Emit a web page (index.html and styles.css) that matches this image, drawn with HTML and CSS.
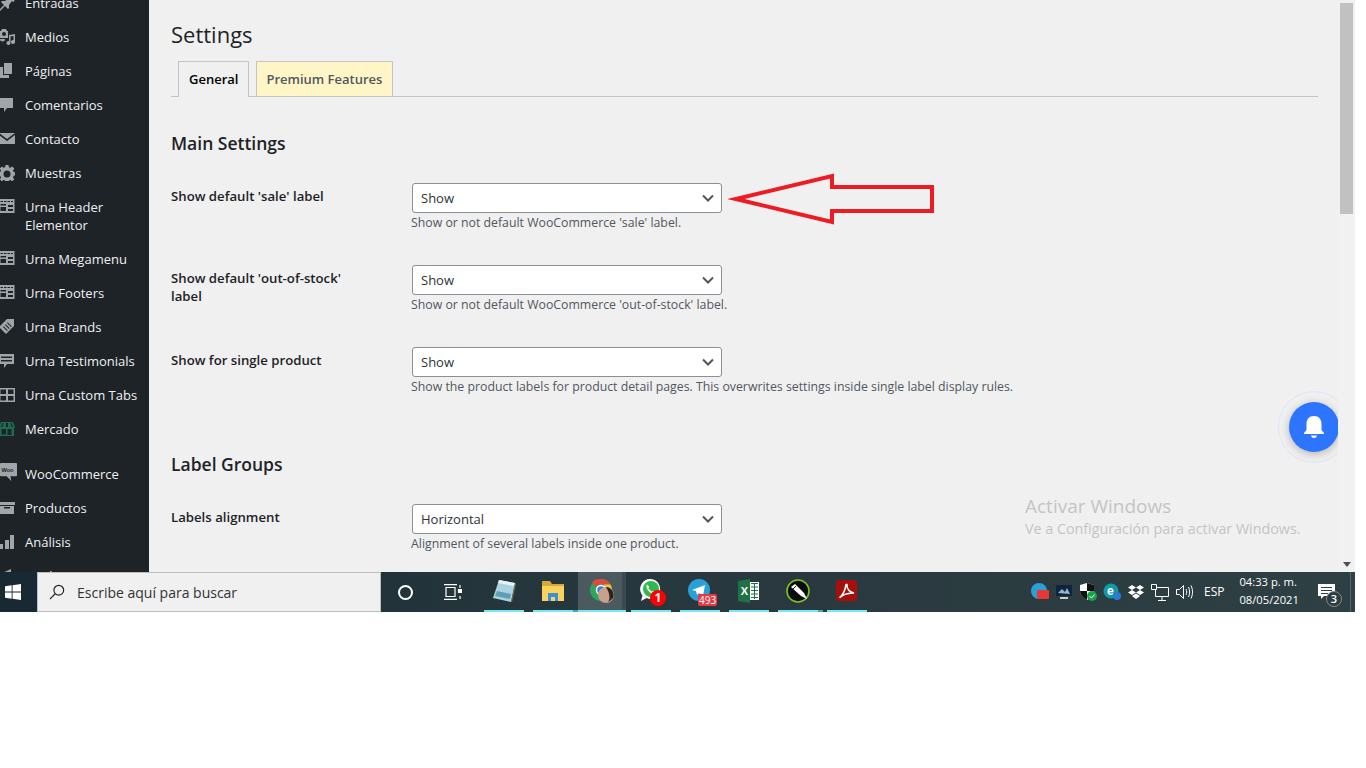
FILE: index.html

```html
<!DOCTYPE html>
<html>
<head>
  <title>Settings</title>
  <link rel="stylesheet" href="styles.css">
</head>
<body>
  <svg class="defs" width="0" height="0">
    <symbol id="i-table" viewBox="0 0 16 16">
      <path d="M0 0h15.500v14H0z M1.500 2v1h2.500V2z M5 2v1h2.500V2z M8.500 2v1h2.500V2z M12 2v1h2V2z M1.500 5v1.500h5.500V5z M1.500 8v4h5.500V8z M9 6v2h5V6z M9 10v2h5v-2z" fill-rule="evenodd"/>
    </symbol>
  </svg>

  <div class="screen">
    <div class="desktop">
      <!-- menu lateral -->
      <nav class="sidebar">
        <ul class="menu">
          <li><svg class="ico" viewBox="0 0 16 16"><path d="M9 0l7 6-2 1-1-1-3 4 0 3-1 1-3-3-5 5-1 0 0-1 5-5-3-3 1-1 3 0 4-3-1-1z"/></svg>Entradas</li>
          <li><svg class="ico" viewBox="0 0 16 16"><path d="M0 2h2l1-2h4l1 2h1v7H0z M5 3a2 2 0 100 4 2 2 0 000-4z M10 6l6-1v8a2 2 0 11-1.500-2V7l-3 .5V14a2 2 0 11-1.500-2z M1 10h5a2.500 2.500 0 11-5 0z" fill-rule="evenodd"/></svg>Medios</li>
          <li><svg class="ico" viewBox="0 0 16 16"><path d="M5 0h8v11H5z M1 4h3v8h6v3H1z"/></svg>Páginas</li>
          <li><svg class="ico" viewBox="0 0 16 16"><path d="M1 1h13v10H8l-3 4v-4H1z"/></svg>Comentarios</li>
          <li><svg class="ico" viewBox="0 0 16 16"><path d="M0 2h16L8 8z M0 4l8 6 8-6v9H0z"/></svg>Contacto</li>
          <li><svg class="ico" viewBox="0 0 16 16"><path d="M6.500 0h3l.4 2.200 1.500.6L13.200 1.500l2.100 2.100-1.300 1.800.7 1.600 2.300.4v3l-2.300.4-.7 1.600 1.300 1.800-2.100 2.100-1.800-1.300-1.500.6-.4 2.400h-3l-.4-2.400-1.500-.6-1.800 1.300L.7 14.300 2 12.500l-.7-1.600L-1 10.500v-3l2.300-.4.700-1.600L.7 3.600l2.100-2.100 1.800 1.300 1.500-.6z M8 5.500a3.500 3.500 0 100 7 3.500 3.500 0 000-7z" fill-rule="evenodd"/></svg>Muestras</li>
          <li><svg class="ico"><use href="#i-table"/></svg>Urna Header Elementor</li>
          <li><svg class="ico"><use href="#i-table"/></svg>Urna Megamenu</li>
          <li><svg class="ico"><use href="#i-table"/></svg>Urna Footers</li>
          <li><svg class="ico" viewBox="0 0 16 16"><path d="M0 8L8 0h7v7l-8 8z M4 8l4 4 .7-.7-4-4z M6 6l4 4 .7-.7-4-4z M8 4l4 4 .7-.7-4-4z" fill-rule="evenodd"/></svg>Urna Brands</li>
          <li><svg class="ico" viewBox="0 0 16 16"><path d="M0 1h15v10H8l-3 4v-4H0z M2 3.500v1.500h11V3.500z M2 7v1.500h11V7z" fill-rule="evenodd"/></svg>Urna Testimonials</li>
          <li><svg class="ico" viewBox="0 0 16 16"><path d="M0 1h16v14H0z M1.500 2.500v4.500h5.500V2.500z M9 2.500v4.500h5.500V2.500z M1.500 9v4.500h5.500V9z M9 9v4.500h5.500V9z" fill-rule="evenodd"/></svg>Urna Custom Tabs</li>
          <li><svg class="ico ico-green" viewBox="0 0 16 16"><path d="M2 1h12l2 5-1 1.500V15H1V7.500L0 6z M3.500 2L2 6h1.500l1-4z M7 2v4h2V2z M11.500 2l1 4H14l-1.500-4z M2.500 8v5.500H7V8z M8.500 8v6h4V8z" fill-rule="evenodd"/></svg>Mercado</li>
          <li class="sep"><svg class="ico ico-woo" viewBox="0 0 18 20"><path d="M1 0h16a1 1 0 011 1v12a1 1 0 01-1 1h-6l1 5-5-5H1a1 1 0 01-1-1V1a1 1 0 011-1z"/><text x="1.500" y="9" class="woo">Woo</text></svg>WooCommerce</li>
          <li><svg class="ico" viewBox="0 0 16 16"><path d="M0 2h16v3H0z M1 6h14v8H1z M5 7v1.500h6V7z" fill-rule="evenodd"/></svg>Productos</li>
          <li><svg class="ico" viewBox="0 0 16 16"><path d="M0 10h4v5H0z M6 6h4v9H6z M11 1h4v14h-4z"/></svg>Análisis</li>
          <li><svg class="ico" viewBox="0 0 16 16"><path d="M1 6l11-5v13L1 10z"/></svg>Marketing</li>
        </ul>
      </nav>

      <main class="content">
        <h1>Settings</h1>
        <div class="tabs">
          <a class="tab tab-active">General</a>
          <a class="tab tab-premium">Premium Features</a>
        </div>

        <h2 class="first">Main Settings</h2>

        <div class="row">
          <label>Show default 'sale' label</label>
          <div class="field">
            <select><option>Show</option></select>
            <p class="desc">Show or not default WooCommerce 'sale' label.</p>
          </div>
        </div>
        <div class="row">
          <label>Show default 'out-of-stock' label</label>
          <div class="field">
            <select><option>Show</option></select>
            <p class="desc">Show or not default WooCommerce 'out-of-stock' label.</p>
          </div>
        </div>
        <div class="row">
          <label>Show for single product</label>
          <div class="field">
            <select><option>Show</option></select>
            <p class="desc">Show the product labels for product detail pages. This overwrites settings inside single label display rules.</p>
          </div>
        </div>

        <h2>Label Groups</h2>

        <div class="row">
          <label>Labels alignment</label>
          <div class="field">
            <select><option>Horizontal</option></select>
            <p class="desc">Alignment of several labels inside one product.</p>
          </div>
        </div>

        <!-- flecha roja pintada encima -->
        <svg class="arrow" width="212" height="60" viewBox="0 0 212 60">
          <path d="M8 27L104 4V15H204V39H104V50Z" fill="none" stroke="#ed1c24" stroke-width="4" stroke-miterlimit="10"/>
        </svg>

        <div class="bell">
          <svg width="24" height="24" viewBox="0 0 24 24"><path d="M12 1c-5 0-7.500 3.500-7.500 8v6L2 18v1h20v-1l-2.500-3V9c0-4.500-2.500-8-7.500-8z M9 20.500h6c-.5 1.800-1.500 2.500-3 2.500s-2.500-.7-3-2.500z" fill="#fff"/></svg>
        </div>

        <div class="watermark">
          <div class="wm-title">Activar Windows</div>
          <div class="wm-sub">Ve a Configuración para activar Windows.</div>
        </div>
      </main>

      <div class="scrollbar">
        <div class="thumb"></div>
        <div class="scroll-down"></div>
      </div>
    </div>

    <footer class="taskbar">
      <div class="start">
        <svg width="16" height="16" viewBox="0 0 18 18"><path d="M0 2.500l7.500-1v7H0z M8.500 1.300L18 0v8.500H8.500z M0 9.500h7.500v7l-7.500-1z M8.500 9.500H18V18l-9.500-1.300z" fill="#fff"/></svg>
      </div>
      <div class="search">
        <svg width="16" height="16" viewBox="0 0 18 18"><circle cx="11" cy="7" r="5.500" fill="none" stroke="#222" stroke-width="1.300"/><path d="M7 11l-6 6" stroke="#222" stroke-width="1.300"/></svg>
        <span>Escribe aquí para buscar</span>
      </div>
      <div class="cortana"><span class="ring"></span></div>
      <div class="taskview">
        <svg width="18" height="16" viewBox="0 0 18 16" fill="none" stroke="#fff" stroke-width="1.200"><path d="M0 .6h13M0 15.400h13M2 3.500h9v9H2z"/><path d="M16 1v3M16 12v3"/><path d="M14.500 5.500h3v3h-3z" fill="#fff"/></svg>
      </div>

      <div class="apps">
        <div class="app">
          <svg width="24" height="24" viewBox="0 0 24 24"><path d="M7 1l16 3-4 19L1 19z" fill="#a9d3de"/><path d="M7 1l16 3-1 3L6 4z" fill="#e8f2f4"/><path d="M19 23l4-19 1 1-4 18z" fill="#7a6a50"/><path d="M5 12l14 3-1 5L3 17z" fill="#5f9fb3"/></svg>
        </div>
        <div class="app app-stack">
          <svg width="24" height="24" viewBox="0 0 24 24"><path d="M1 2h8l2 3h12v5H1z" fill="#d9a83a"/><path d="M1 7h22v15H1z" fill="#fbd25c"/><path d="M7 14h10v8h-3v-4h-4v4H7z" fill="#3a8fd8"/></svg>
        </div>
        <div class="app app-active">
          <svg width="26" height="26" viewBox="0 0 26 26"><circle cx="12" cy="12" r="11" fill="#2ea55a"/><path d="M12 1a11 11 0 019.500 5.500H12A5.500 5.500 0 007 9L3 4a11 11 0 019-3z" fill="#dd4b3e"/><path d="M21.500 6.500A11 11 0 0121 18l-5-2-1-9.500z" fill="#f3c13a"/><circle cx="12" cy="12" r="4.500" fill="#3b78e7" stroke="#fff" stroke-width="1.500"/><circle cx="17" cy="17" r="8" fill="#c9a08a"/><path d="M17 9a8 8 0 017 11c-2 2-3 3-5 4 3-4 1-10-2-15z" fill="#2c2320"/></svg>
        </div>
        <div class="app">
          <svg width="24" height="26" viewBox="0 0 24 26"><path d="M2 23l1.500-5.500A10 10 0 1112 21a10 10 0 01-4.500-1z" fill="#fff"/><circle cx="12" cy="11" r="8" fill="#2fb84d"/><path d="M8 6.500c-1.500 2 0 5 2 7s4.500 3 6 1.500l-1.500-2-2 .5-3-3 .5-2z" fill="#fff"/></svg>
          <span class="badge-red">1</span>
        </div>
        <div class="app">
          <svg width="24" height="24" viewBox="0 0 24 24"><circle cx="11" cy="11" r="11" fill="#2a9fd8"/><path d="M4 11l13-5-2 11-4-3-2 2-1-4z" fill="#fff"/></svg>
          <span class="badge-count">493</span>
        </div>
        <div class="app">
          <svg width="24" height="24" viewBox="0 0 24 24"><path d="M8 3h14v18H8z" fill="#fff"/><path d="M14 4.500h7M14 8h7M14 11.500h7M14 15h7M14 18.500h7M17.500 4v16" stroke="#1f7244" stroke-width="1"/><path d="M1 2l12-2v24L1 22z" fill="#1f7244"/><text x="3.700" y="16" class="xl">X</text></svg>
        </div>
        <div class="app app-stack">
          <svg width="24" height="24" viewBox="0 0 24 24"><circle cx="12" cy="12" r="11" fill="#0c0c0c" stroke="#7fc31c" stroke-width="1.600"/><path d="M5 8l4-3 9 9 3 6-6-3z" fill="#fff"/><path d="M7 10l3-3" stroke="#0c0c0c"/></svg>
        </div>
        <div class="app">
          <svg width="22" height="22" viewBox="0 0 22 22"><rect width="21" height="21" rx="3" fill="#a50f0c"/><path d="M4 17c3-2 5-7 6-12 0-1 1-1 1 0 0 4 3 7 7 8-4 0-9 1-12 3-1 1-2 2-2 1z" fill="none" stroke="#fff" stroke-width="1.500"/></svg>
        </div>
      </div>

      <div class="tray">
        <span class="tray-item"><svg width="18" height="18" viewBox="0 0 18 18"><circle cx="8" cy="8" r="8" fill="#2a9fd8"/><rect x="6" y="7" width="12" height="9" rx="1" fill="#e53935"/></svg></span>
        <span class="tray-item"><svg width="18" height="16" viewBox="0 0 18 16"><path d="M1 1h16v11H1z" fill="#10243c"/><path d="M3 9l4-4 3 3 2-4 3 6z" fill="#8fb6d8"/><path d="M5 13h8v2H5z" fill="#ccc"/></svg></span>
        <span class="tray-item"><svg width="18" height="18" viewBox="0 0 18 18"><path d="M8 0l7 2v6c0 4-3 7-7 9-4-2-7-5-7-9V2z" fill="#fff"/><path d="M8 0v8h7V2z M8 8v9c-4-2-7-5-7-9z" fill="#111"/><circle cx="13" cy="13" r="5" fill="#17a34a"/><path d="M10.500 13l2 2 3-3.500" fill="none" stroke="#fff"/></svg></span>
        <span class="tray-item"><svg width="18" height="18" viewBox="0 0 18 18"><circle cx="8" cy="8" r="7.500" fill="#0e9aa7"/><text x="4" y="12" class="tray-e">e</text><circle cx="14" cy="13" r="4" fill="#2a7ad8"/></svg></span>
        <span class="tray-item"><svg width="16" height="15" viewBox="0 0 16 15" fill="#fff"><path d="M4 0l4 2.500L4 5 0 2.500z M12 0l4 2.500L12 5 8 2.500z M4 5l4 2.500L4 10 0 7.500z M12 5l4 2.500-4 2.500-4-2.500z M4 11l4-2.500 4 2.500-4 3z"/></svg></span>
        <span class="tray-item"><svg width="18" height="17" viewBox="0 0 18 17" fill="none" stroke="#fff"><path d="M4.500 3.500h13v9h-13zM11 13v3M7 16.500h8"/><path d="M.500.500h5v5h-5z" fill="#2c3c42"/></svg></span>
        <span class="tray-item"><svg width="17" height="16" viewBox="0 0 17 16" fill="none" stroke="#fff"><path d="M.500 5.500h3l4-4v13l-4-4h-3z"/><path d="M10 5c1 2 1 4 0 6M12.500 3c1.500 3 1.500 7 0 10M15 1.500c2 4 2 9 0 13"/></svg></span>
      </div>
      <div class="lang">ESP</div>
      <div class="clock"><div>04:33 p. m.</div><div>08/05/2021</div></div>
      <div class="notif">
        <svg width="17" height="15" viewBox="0 0 17 15"><path d="M0 0h17v12H6l-3 3v-3H0z M3 3v1h11V3z M3 6v1h11V6z M3 9v1h7V9z" fill="#fff" fill-rule="evenodd"/></svg>
        <span class="notif-count">3</span>
      </div>
    </footer>
  </div>
</body>
</html>
```

FILE: styles.css

```css
/* pagina */
html, body {
  margin: 0;
  padding: 0;
  background: #fff;
}
body {
  font-family: "Open Sans", "Noto Sans", sans-serif;
  font-size: 13px;
  color: #1d2327;
}
.defs {
  position: absolute;
}
.screen {
  width: 1355px;
  height: 612px;
  display: flex;
  flex-direction: column;
  overflow: hidden;
}
.desktop {
  display: flex;
  height: 572px;
  background: #f0f0f1;
}

/* menu lateral */
.sidebar {
  width: 149px;
  flex: none;
  background: #1d2327;
  overflow: hidden;
}
.menu {
  list-style: none;
  margin: -14px 0 0;
  padding: 0;
}
.menu li {
  position: relative;
  padding: 8px 6px 8px 25px;
  font-size: 13px;
  line-height: 18px;
  color: #f0f0f1;
}
.menu li.sep {
  margin-top: 11px;
}
.ico {
  position: absolute;
  left: -1px;
  top: 9px;
  width: 16px;
  height: 16px;
  fill: #a0a5aa;
}
.ico-green {
  fill: #1f6b52;
}
.ico-woo {
  left: 0;
  top: 6px;
  width: 17px;
  height: 19px;
}
.woo {
  font-family: "Liberation Sans", sans-serif;
  font-size: 6px;
  font-weight: 700;
  fill: #1d2327;
}

/* contenido */
.content {
  position: relative;
  flex: 1;
  min-width: 0;
  padding: 0 20px 0 22px;
  overflow: hidden;
}
h1 {
  margin: 20px 0 0;
  font-size: 22px;
  font-weight: 400;
  line-height: 29px;
  color: #1d2327;
}
.tabs {
  display: flex;
  gap: 7px;
  height: 35px;
  margin-top: 12px;
  padding-left: 7px;
  border-bottom: 1px solid #c3c4c7;
}
.tab {
  height: 34px;
  padding: 0 10px;
  border: 1px solid #c3c4c7;
  border-bottom: none;
  font-weight: 600;
  font-size: 13px;
  line-height: 34px;
}
.tab-active {
  height: 35px;
  background: #f0f0f1;
  color: #000;
}
.tab-premium {
  padding-left: 9px;
  background: #fff6c7;
  color: #50575e;
}
h2 {
  margin: 51px 0 0;
  font-size: 17.500px;
  font-weight: 600;
  line-height: 24px;
}
h2.first {
  margin-top: 34px;
}
.row {
  display: flex;
  margin-top: 28px;
  min-height: 54px;
}
.row label {
  width: 178px;
  margin-right: 62px;
  padding-top: 4px;
  font-size: 13.200px;
  font-weight: 600;
  line-height: 18px;
}
select {
  display: block;
  appearance: none;
  width: 310px;
  height: 30px;
  margin-left: 1px;
  padding: 0 24px 0 8px;
  border: 1px solid #8c8f94;
  border-radius: 3px;
  background: #fff url("data:image/svg+xml;utf8,<svg xmlns='http://www.w3.org/2000/svg' width='12' height='8'><path d='M1 1.500l5 5 5-5' fill='none' stroke='%23555' stroke-width='2'/></svg>") no-repeat right 7px center;
  font-family: inherit;
  font-size: 13px;
  color: #2c3338;
}
.desc {
  margin: 1px 0 0;
  font-size: 12.300px;
  line-height: 18px;
  color: #50575e;
  white-space: nowrap;
}
.arrow {
  position: absolute;
  left: 579px;
  top: 172px;
}
.bell {
  position: absolute;
  left: 1140px;
  top: 402px;
  width: 50px;
  height: 50px;
  display: flex;
  align-items: center;
  justify-content: center;
  border-radius: 50%;
  background: #2d74ff;
  box-shadow: 0 2px 8px rgba(0, 0, 0, 0.25), 0 0 0 10px #f0f0f1, 0 0 0 11px #dce6f7;
}
.watermark {
  position: absolute;
  left: 876px;
  top: 494px;
  color: #c4c4c5;
}
.wm-title {
  font-size: 19px;
  line-height: 25px;
}
.wm-sub {
  font-size: 14.300px;
  line-height: 20px;
}

/* barra de scroll */
.scrollbar {
  position: relative;
  width: 17px;
  flex: none;
  background: #f1f1f1;
}
.thumb {
  width: 13px;
  height: 211px;
  margin: 3px 0 0 2px;
  background: #c1c1c1;
}
.scroll-down {
  position: absolute;
  left: 5px;
  bottom: 5px;
  border-top: 5px solid #505050;
  border-left: 4px solid transparent;
  border-right: 4px solid transparent;
}

/* barra de tareas */
.taskbar {
  position: relative;
  display: flex;
  align-items: stretch;
  height: 40px;
  color: #fff;
  background: linear-gradient(90deg, #1a2a33 0%, #26363d 40%, #2f4044 100%);
}
.taskbar::after {
  content: "";
  position: absolute;
  left: 1350px;
  top: 0;
  bottom: 0;
  width: 1px;
  background: #55666a;
}
.start {
  width: 37px;
  flex: none;
  box-sizing: border-box;
  display: flex;
  align-items: center;
  padding-left: 5px;
  background: #182933;
}
.search {
  width: 344px;
  flex: none;
  box-sizing: border-box;
  display: flex;
  align-items: center;
  gap: 12px;
  padding-left: 11px;
  background: #f0f0f0;
  border: 1px solid #bdbdbd;
  color: #333;
  font-size: 14px;
}
.cortana {
  width: 48px;
  flex: none;
  display: flex;
  align-items: center;
  justify-content: center;
}
.ring {
  width: 11px;
  height: 11px;
  border: 2px solid #fff;
  border-radius: 50%;
}
.taskview {
  width: 48px;
  flex: none;
  display: flex;
  align-items: center;
  justify-content: center;
}
.apps {
  display: flex;
  flex: none;
  margin-left: 2.500px;
}
.app {
  position: relative;
  width: 40px;
  margin: 0 4.500px;
  display: flex;
  align-items: center;
  justify-content: center;
  border-bottom: 2px solid #76e8ee;
  box-sizing: border-box;
}
.app-stack::after {
  content: "";
  position: absolute;
  right: -5px;
  bottom: -2px;
  width: 5px;
  height: 2px;
  background: #4fa6ab;
}
.app-active {
  width: 48px;
  margin: 0 0.500px;
  background: linear-gradient(90deg, #4a5a5f 44px, #3c4b50 44px);
}
.badge-red {
  position: absolute;
  left: 19px;
  top: 18px;
  width: 16px;
  height: 16px;
  border-radius: 50%;
  background: #f00;
  font-size: 12px;
  font-weight: 700;
  line-height: 16px;
  text-align: center;
}
.badge-count {
  position: absolute;
  left: 18px;
  top: 22px;
  padding: 0 1px;
  border-radius: 2px;
  background: #e53945;
  font-size: 10px;
  line-height: 12px;
}
.xl {
  font-family: "Liberation Sans", sans-serif;
  font-size: 11px;
  font-weight: 700;
  fill: #fff;
}
.tray-e {
  font-family: "Liberation Sans", sans-serif;
  font-size: 12px;
  font-weight: 700;
  fill: #fff;
}
.tray {
  display: flex;
  align-items: center;
  margin-left: 156.500px;
}
.tray-item {
  width: 24px;
  display: flex;
  justify-content: center;
}
.lang {
  margin-left: 8px;
  font-size: 12px;
  line-height: 40px;
}
.clock {
  margin-left: 15px;
  padding-top: 1px;
  font-size: 11.200px;
  line-height: 18px;
  white-space: nowrap;
}
.notif {
  position: relative;
  margin-left: 19px;
  padding-top: 12px;
}
.notif-count {
  position: absolute;
  left: 8px;
  top: 19px;
  width: 14px;
  height: 14px;
  border: 1px solid #888;
  border-radius: 50%;
  background: #2c3c42;
  font-size: 11px;
  font-weight: 600;
  line-height: 14px;
  text-align: center;
}
```
